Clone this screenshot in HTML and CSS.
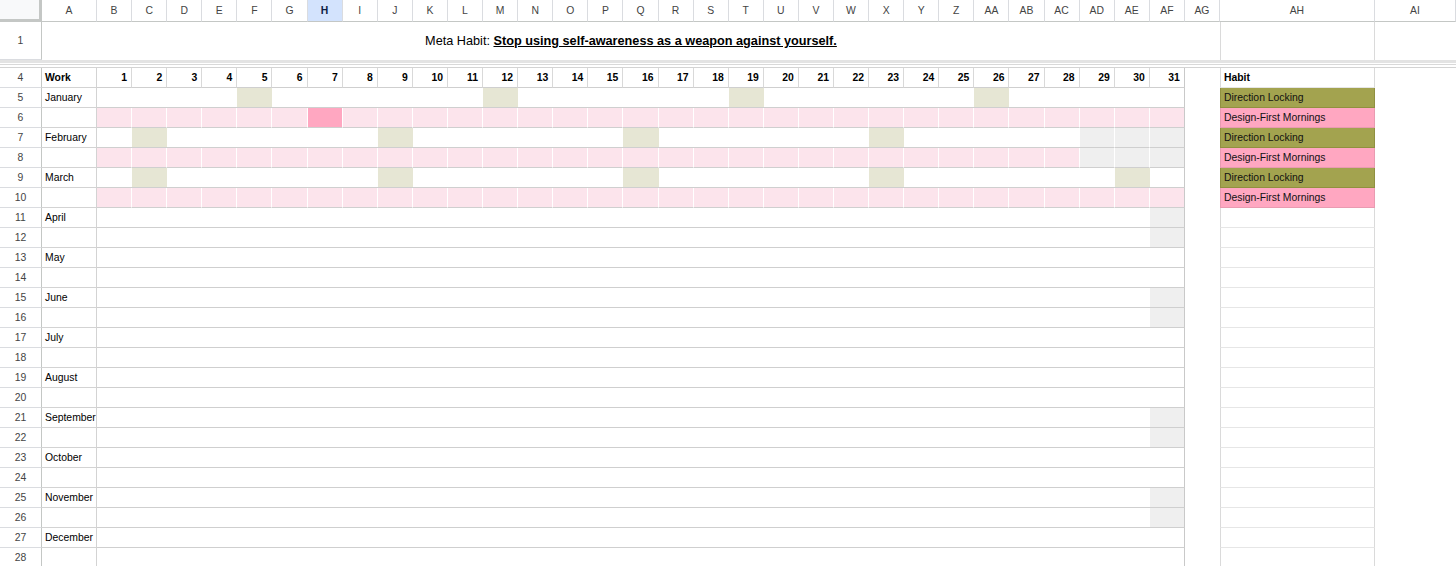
FILE: index.html
```html
<!DOCTYPE html>
<html lang="en">
<head>
    <meta charset="UTF-8">
    <meta name="viewport" content="width=device-width, initial-scale=1.0">
    <title>Habit Tracker</title>
    <link rel="stylesheet" href="styles.css">
</head>
<body>
    <div class="sheet" id="sheet">
        <!-- Cells will be added here by JavaScript -->
    </div>

    <script>
        document.addEventListener("DOMContentLoaded", function() {
            const sheet = document.getElementById('sheet');

            const letters = [];
            for (let i = 0; i < 26; i++) letters.push(String.fromCharCode(65 + i));
            for (let i = 0; i < 9; i++) letters.push('A' + String.fromCharCode(65 + i));

            const months = ['January', 'February', 'March', 'April', 'May', 'June', 'July',
                'August', 'September', 'October', 'November', 'December'];
            const daysIn = [31, 28, 31, 30, 31, 30, 31, 31, 30, 31, 30, 31];

            // days marked in the first row of a month
            const offDays = { 0: [5, 12, 19, 26], 1: [2, 9, 16, 23], 2: [2, 9, 16, 23, 30] };
            // months whose second row is filled in
            const pinkMonths = [0, 1, 2];
            const hotDays = { 0: [7] };

            const habits = [
                { name: 'Direction Locking', kind: 'dir' },
                { name: 'Design-First Mornings', kind: 'dfm' }
            ];

            function cell(className, text) {
                const div = document.createElement('div');
                div.className = className;
                if (text !== undefined) div.innerHTML = text;
                sheet.appendChild(div);
                return div;
            }

            // column letters
            cell('corner');
            letters.forEach(function(letter) {
                cell(letter === 'H' ? 'col-head active' : 'col-head', letter);
            });

            // row 1
            cell('row-head', '1');
            cell('title', '<span>Meta Habit: <b>Stop using self-awareness as a weapon against yourself.</b></span>');
            cell('habit plain top');
            cell('blank');

            // hidden rows 2 and 3
            cell('freeze');

            // row 4
            cell('row-head', '4');
            cell('name bold', 'Work');
            for (let d = 1; d <= 31; d++) {
                cell(d === 31 ? 'num end' : 'num', d);
            }
            cell('blank');
            cell('habit plain bold', 'Habit');
            cell('blank');

            // rows 5 - 28
            for (let r = 5; r <= 28; r++) {
                const m = Math.floor((r - 5) / 2);
                const second = (r - 5) % 2 === 1;

                cell('row-head', r);
                cell('name', second ? '' : months[m]);

                for (let d = 1; d <= 31; d++) {
                    let cls = 'day';
                    if (d > daysIn[m]) {
                        cls += ' na';
                    } else if (second && pinkMonths.includes(m)) {
                        cls += (hotDays[m] || []).includes(d) ? ' hot' : ' pink';
                    } else if (!second && (offDays[m] || []).includes(d)) {
                        cls += ' off';
                    }
                    if (d === 31) cls += ' end';
                    cell(cls);
                }

                cell('blank');
                if (r <= 10) {
                    const habit = habits[(r - 5) % 2];
                    cell('habit ' + habit.kind, habit.name);
                } else {
                    cell('habit plain');
                }
                cell('blank');
            }
        });
    </script>
</body>
</html>
```

FILE: styles.css
```css
body {
    font-family: 'Liberation Sans', Arial, Helvetica, sans-serif;
    background-color: #ffffff;
    color: #000000;
    margin: 0;
    padding: 0;
    overflow: hidden;
}

.sheet {
    display: grid;
    grid-template-columns: 42px 55px repeat(31, 35.1px) 35px 155px 81px;
    grid-template-rows: 22px 38px 8px;
    grid-auto-rows: 20px;
    font-size: 10.4px;
}

.sheet > div {
    box-sizing: border-box;
    display: flex;
    align-items: center;
    white-space: nowrap;
    overflow: hidden;
}

.corner {
    background-color: #f8f9fa;
    border-right: 3px solid #c4c7c5;
    border-bottom: 3px solid #c4c7c5;
}

.col-head {
    justify-content: center;
    color: #444444;
    border-right: 1px solid #dadce0;
    border-bottom: 1px solid #c4c7c5;
}

.col-head.active {
    background-color: #d3e3fd;
    color: #0b1d44;
    font-weight: bold;
}

.row-head {
    justify-content: center;
    color: #444444;
    border-right: 1px solid #c4c7c5;
    border-bottom: 1px solid #dadce0;
}

.title {
    grid-column: span 33;
    justify-content: center;
    font-size: 12.7px;
}

.title b {
    text-decoration: underline;
}

.freeze {
    grid-column: 1 / -1;
    border-top: 3px solid #e3e3e3;
    border-bottom: 1px solid #d3d3d3;
    background: linear-gradient(#ffffff 0 1px, #d9d9d9 1px 2px, #ffffff 2px);
}

.bold {
    font-weight: bold;
}

.name {
    padding-left: 3px;
    border-right: 1px solid #d3d3d3;
    border-bottom: 1px solid #d3d3d3;
}

.num {
    justify-content: flex-end;
    padding-right: 4px;
    font-weight: bold;
    border-right: 1px solid #d9d9d9;
    border-bottom: 1px solid #cfcfcf;
}

.day {
    border-bottom: 1px solid #cfcfcf;
}

.day.pink {
    background-color: #fce4ec;
    border-right: 1px solid #ffffff;
}

.day.hot {
    background-color: #ffa7c1;
    border-right: 1px solid #ffffff;
}

.day.off {
    background-color: #e6e6d4;
}

.day.na {
    background-color: #efefef;
    border-right: 1px solid #ffffff;
}

.day.end,
.num.end {
    border-right: 1px solid #c9c9c9;
}

.habit {
    padding-left: 3px;
    border-left: 1px solid #dadada;
    border-right: 1px solid #dadada;
    border-bottom: 1px solid #e6e6e6;
}

.habit.top {
    border-bottom: none;
}

.habit.dir {
    background-color: #a3a34f;
    border-color: #909040;
    color: #111111;
}

.habit.dfm {
    background-color: #ffa7c1;
    border-color: #e99bb1;
    color: #111111;
}
```
